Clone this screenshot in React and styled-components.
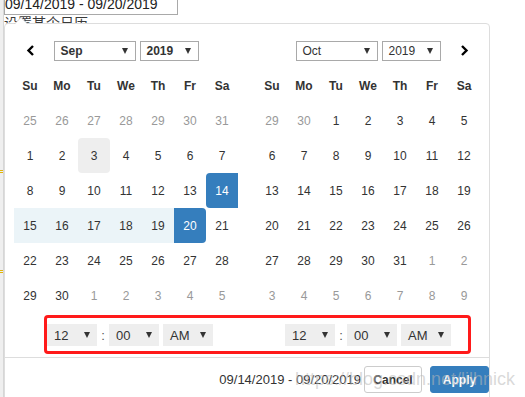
import React from 'react';
import styled, { createGlobalStyle } from 'styled-components';

const GlobalStyle = createGlobalStyle`
  html, body {
    margin: 0;
    padding: 0;
    background: #fff;
  }
  body {
    font-family: "Liberation Sans", Arial, "Noto Sans CJK SC", sans-serif;
    color: #333;
    overflow: hidden;
  }
`

const Page = styled.div`
  position: relative;
  display: flex;
  height: 397px;
  overflow: hidden;
`

const Gutter = styled.div`
  flex: none;
  width: 3px;
  background: #efefef;
  border-right: 1px solid #d6d6d6;
  display: flex;
  flex-direction: column;
`

const Mark = styled.div`
  margin-top: ${p => p.$gap}px;
  height: 1px;
  border-top: 1px solid #e3b505;
  border-bottom: 1px solid #e3b505;
`

const Main = styled.div`
  position: relative;
  flex: 1;
`

const RangeInput = styled.div`
  box-sizing: border-box;
  width: 174px;
  height: 20px;
  margin-top: -5px;
  border: 1px solid #a9a9a9;
  font-size: 14px;
  line-height: 16px;
  color: #222;
`

const Label = styled.div`
  font-size: 14px;
  line-height: 16px;
  color: #3a3a3a;
`

const Picker = styled.div`
  position: absolute;
  top: 23px;
  left: 0;
  box-sizing: border-box;
  width: 486px;
  padding-top: 9px;
  background: #fff;
  border: 1px solid #ddd;
  border-radius: 4px;

  &::before {
    content: '';
    position: absolute;
    top: -7px;
    left: 9px;
    border-left: 7px solid transparent;
    border-right: 7px solid transparent;
    border-bottom: 7px solid #ccc;
  }
  &::after {
    content: '';
    position: absolute;
    top: -6px;
    left: 10px;
    border-left: 6px solid transparent;
    border-right: 6px solid transparent;
    border-bottom: 6px solid #fff;
  }
`

const Calendars = styled.div`
  display: flex;
  gap: 18px;
  padding: 0 9px;
`

const CalendarColumn = styled.div`
  display: flex;
  flex-direction: column;
  width: 224px;
`

const Grid = styled.div`
  display: grid;
  grid-template-columns: repeat(7, 32px);
  grid-auto-rows: 35px;
`

const NavCell = styled.div`
  display: flex;
  align-items: center;
  justify-content: center;
`

const TitleCell = styled.div`
  grid-column: span 5;
  display: flex;
  align-items: center;
  justify-content: center;
  gap: 4px;
`

const Select = styled.div`
  display: flex;
  align-items: center;
  justify-content: space-between;
  box-sizing: border-box;
  width: ${p => p.$w}px;
  height: ${p => (p.$flat ? 22 : 20)}px;
  padding: 0 7px 0 ${p => (p.$flat ? 7 : 6)}px;
  border: ${p => (p.$flat ? 'none' : '1px solid #a9a9a9')};
  background: ${p => (p.$flat ? '#eee' : '#fff')};
  font-size: ${p => (p.$flat ? 13 : 12)}px;
  font-weight: ${p => (p.$bold ? 'bold' : 'normal')};
  color: #333;
`

const Caret = styled.span`
  width: 0;
  height: 0;
  border-left: 3px solid transparent;
  border-right: 3px solid transparent;
  border-top: 6px solid #333;
`

const DayName = styled.div`
  display: flex;
  align-items: center;
  justify-content: center;
  font-size: 12px;
  font-weight: bold;
  color: #333;
`

const toneBg = {
  hover: '#eee',
  start: '#357ebd',
  end: '#357ebd',
  range: '#ebf4f8',
}

const toneRadius = {
  hover: '4px',
  start: '4px 0 0 4px',
  end: '0 4px 4px 0',
}

const Day = styled.div`
  display: flex;
  align-items: center;
  justify-content: center;
  font-size: 12px;
  color: ${p => (p.$off ? '#999' : p.$tone === 'start' || p.$tone === 'end' ? '#fff' : '#333')};
  background: ${p => toneBg[p.$tone] || 'transparent'};
  border-radius: ${p => toneRadius[p.$tone] || '0'};
`

const TimeRow = styled.div`
  display: flex;
  align-items: center;
  justify-content: center;
  padding: 11px 0 11px ${p => p.$indent || 0}px;
`

const Colon = styled.span`
  width: 12px;
  text-align: center;
  font-size: 13px;
  color: #555;
`

const TimeGap = styled.span`
  width: 4px;
`

const Annotation = styled.div`
  position: absolute;
  left: 39px;
  top: 291px;
  width: 427px;
  height: 39px;
  box-sizing: border-box;
  border: 3px solid #ff1a1a;
  border-radius: 4px;
  pointer-events: none;
`

const Footer = styled.div`
  display: flex;
  align-items: center;
  justify-content: flex-end;
  padding: 8px 0;
  border-top: 1px solid #ddd;
`

const Selected = styled.span`
  margin-right: 3px;
  font-size: 13px;
  color: #333;
`

const Button = styled.button`
  box-sizing: border-box;
  width: ${p => p.$w}px;
  height: 27px;
  margin-left: ${p => p.$ml || 0}px;
  padding: 0;
  font-family: inherit;
  font-size: 12px;
  font-weight: bold;
  border-radius: 3px;
  border: 1px solid ${p => (p.$primary ? '#357ebd' : '#ccc')};
  background: ${p => (p.$primary ? '#357ebd' : '#fff')};
  color: ${p => (p.$primary ? '#fff' : '#333')};
`

const Watermark = styled.div`
  position: absolute;
  right: 10px;
  top: 369px;
  font-size: 18px;
  line-height: 20px;
  color: rgba(185, 185, 185, 0.55);
  pointer-events: none;
  white-space: nowrap;
`

const Chevron = ({ dir }) => (
  <svg width="9" height="11" viewBox="0 0 9 11">
    <polyline
      points={dir === 'left' ? '7,1 2.5,5.5 7,10' : '2,1 6.5,5.5 2,10'}
      fill="none"
      stroke="#000"
      strokeWidth="2.4"
    />
  </svg>
)

const dayNames = ['Su', 'Mo', 'Tu', 'We', 'Th', 'Fr', 'Sa']

const range = (a, b) => Array.from({ length: b - a + 1 }, (_, i) => a + i)

const sepDays = [
  ...range(25, 31).map(d => ({ d, off: true })),
  ...range(1, 30).map(d => ({
    d,
    tone: d === 3 ? 'hover' : d === 14 ? 'start' : d === 20 ? 'end' : d > 14 && d < 20 ? 'range' : null,
  })),
  ...range(1, 5).map(d => ({ d, off: true })),
]

const octDays = [
  ...range(29, 30).map(d => ({ d, off: true })),
  ...range(1, 31).map(d => ({ d })),
  ...range(1, 9).map(d => ({ d, off: true })),
]

const TimePicker = ({ indent }) => (
  <TimeRow $indent={indent}>
    <Select $flat $w={50}>12<Caret /></Select>
    <Colon>:</Colon>
    <Select $flat $w={50}>00<Caret /></Select>
    <TimeGap />
    <Select $flat $w={50}>AM<Caret /></Select>
  </TimeRow>
)

const Calendar = ({ month, days, side, bold }) => (
  <CalendarColumn>
    <Grid>
      <NavCell>{side === 'left' && <Chevron dir="left" />}</NavCell>
      <TitleCell>
        <Select $w={82} $bold={bold}>{month}<Caret /></Select>
        <Select $w={59} $bold={bold}>2019<Caret /></Select>
      </TitleCell>
      <NavCell>{side === 'right' && <Chevron dir="right" />}</NavCell>
      {dayNames.map(n => <DayName key={n}>{n}</DayName>)}
      {days.map((e, key) => (
        <Day key={key} $off={e.off} $tone={e.tone}>{e.d}</Day>
      ))}
    </Grid>
    <TimePicker indent={side === 'left' ? 8 : 0} />
  </CalendarColumn>
)

const App = () => (
  <Page>
    <GlobalStyle />
    <Gutter>
      <Mark $gap={170} />
      <Mark $gap={97} />
    </Gutter>
    <Main>
      <RangeInput>09/14/2019 - 09/20/2019</RangeInput>
      <Label>设置某个日历</Label>
      <Picker>
        <Calendars>
          <Calendar month="Sep" days={sepDays} side="left" bold />
          <Calendar month="Oct" days={octDays} side="right" />
        </Calendars>
        <Footer>
          <Selected>09/14/2019 - 09/20/2019</Selected>
          <Button $w={58}>Cancel</Button>
          <Button $w={59} $ml={8} $primary>Apply</Button>
        </Footer>
        <Annotation />
      </Picker>
    </Main>
    <Watermark>https://blog.csdn.net/lilhnick</Watermark>
  </Page>
)

export default App
